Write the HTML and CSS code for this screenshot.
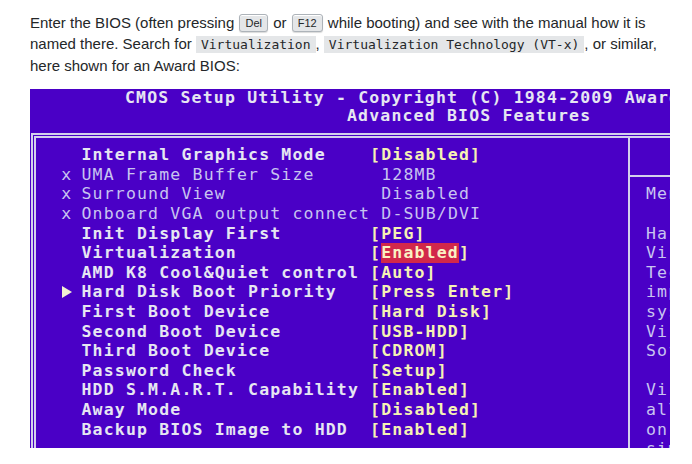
FILE: index.html
```html
<!DOCTYPE html>
<html lang="en">
<head>
<meta charset="utf-8">
<title>Award BIOS</title>
<link rel="stylesheet" href="styles.css">
</head>
<body>
<div class="post">
  <p class="lead">Enter the BIOS (often pressing <kbd>Del</kbd> or <kbd>F12</kbd> while booting) and see with the manual how it is named there. Search for <code>Virtualization</code>, <code>Virtualization Technology (VT-x)</code>, or similar, here shown for an Award BIOS:</p>
  <div class="shot">
    <div class="hdr">
      <div class="hdr-1">CMOS Setup Utility - Copyright (C) 1984-2009 Award Software</div>
      <div class="hdr-2">Advanced BIOS Features</div>
    </div>
    <div class="frame">
      <div class="inner">
        <div class="list">
          <div class="row"><span class="mark"></span><span class="label">Internal Graphics Mode</span><span class="val">[Disabled]</span></div>
          <div class="row dim"><span class="mark">x</span><span class="label">UMA Frame Buffer Size</span><span class="val">128MB</span></div>
          <div class="row dim"><span class="mark">x</span><span class="label">Surround View</span><span class="val">Disabled</span></div>
          <div class="row dim"><span class="mark">x</span><span class="label">Onboard VGA output connect</span><span class="val">D-SUB/DVI</span></div>
          <div class="row"><span class="mark"></span><span class="label">Init Display First</span><span class="val">[PEG]</span></div>
          <div class="row"><span class="mark"></span><span class="label">Virtualization</span><span class="val">[<span class="hl">Enabled</span>]</span></div>
          <div class="row"><span class="mark"></span><span class="label">AMD K8 Cool&amp;Quiet control</span><span class="val">[Auto]</span></div>
          <div class="row"><span class="mark"><svg class="tri" width="10" height="12" viewBox="0 0 10 12"><path d="M0 0 L10 6 L0 12 Z"/></svg></span><span class="label">Hard Disk Boot Priority</span><span class="val">[Press Enter]</span></div>
          <div class="row"><span class="mark"></span><span class="label">First Boot Device</span><span class="val">[Hard Disk]</span></div>
          <div class="row"><span class="mark"></span><span class="label">Second Boot Device</span><span class="val">[USB-HDD]</span></div>
          <div class="row"><span class="mark"></span><span class="label">Third Boot Device</span><span class="val">[CDROM]</span></div>
          <div class="row"><span class="mark"></span><span class="label">Password Check</span><span class="val">[Setup]</span></div>
          <div class="row"><span class="mark"></span><span class="label">HDD S.M.A.R.T. Capability</span><span class="val">[Enabled]</span></div>
          <div class="row"><span class="mark"></span><span class="label">Away Mode</span><span class="val">[Disabled]</span></div>
          <div class="row"><span class="mark"></span><span class="label">Backup BIOS Image to HDD</span><span class="val">[Enabled]</span></div>
        </div>
        <div class="help">
          <div class="help-top">Item Help</div>
          <div class="help-body">
            <div class="hrow">Menu Level</div>
            <div class="hrow"></div>
            <div class="hrow">Hardware assisted</div>
            <div class="hrow">Virtualization</div>
            <div class="hrow">Technology which help</div>
            <div class="hrow">improve performance of</div>
            <div class="hrow">system if you install</div>
            <div class="hrow">Virtual Machine Monitor</div>
            <div class="hrow">Software.</div>
            <div class="hrow"></div>
            <div class="hrow">Virtualization Technology</div>
            <div class="hrow">allows a platform to run</div>
            <div class="hrow">on multiple operating</div>
            <div class="hrow">simultaneously.</div>
          </div>
        </div>
      </div>
    </div>
  </div>
</div>
</body>
</html>
```
FILE: styles.css
```css
html, body {
  margin: 0;
  background: #ffffff;
}

.post {
  padding: 12px 0 0 30px;
  width: 634px;
  font-family: "Liberation Sans", Arial, sans-serif;
  font-size: 15px;
  line-height: 21px;
  color: #242729;
}

.lead {
  margin: 0 0 13px;
}

kbd {
  display: inline-block;
  font-family: "Liberation Sans", Arial, sans-serif;
  font-size: 11px;
  line-height: 14px;
  padding: 1px 5px;
  margin: 0 1px;
  color: #242729;
  background: #e4e6e8;
  border: 1px solid #adb3b9;
  border-radius: 3px;
  box-shadow: 0 1px 1px rgba(12, 13, 14, 0.15), inset 0 1px 0 0 #ffffff;
  vertical-align: 1px;
}

code {
  font-family: "DejaVu Sans Mono", "Liberation Mono", monospace;
  font-size: 13px;
  padding: 1px 5px;
  background: #e4e6e8;
  color: #242729;
}

/* BIOS screenshot */
.shot {
  width: 640px;
  height: 359px;
  overflow: hidden;
  background: #4a00c6;
  font-family: "DejaVu Sans Mono", "Liberation Mono", monospace;
  font-weight: bold;
  font-size: 16.5px;
  letter-spacing: 1.17px;
  color: #e6e6f2;
  white-space: nowrap;
}

.hdr {
  height: 44px;
}

.hdr-1 {
  height: 17px;
  line-height: 17px;
  padding-left: 95px;
}

.hdr-2 {
  height: 19.6px;
  line-height: 19.6px;
  padding-left: 317px;
}

.frame {
  margin-left: 1px;
  border-top: 2px solid #d4d0ec;
  border-left: 2px solid #d4d0ec;
  padding: 1px 0 0 1px;
}

.inner {
  display: flex;
  border-top: 2px solid #d4d0ec;
  border-left: 2px solid #d4d0ec;
  height: 320px;
}

.list {
  flex: 0 0 592px;
  padding-top: 7.2px;
  padding-left: 23.3px;
  box-sizing: border-box;
}

.row {
  display: flex;
  height: 19.6px;
  line-height: 19.6px;
}

.mark {
  flex: 0 0 22.2px;
  display: flex;
  align-items: center;
}

.label {
  flex: 0 0 288.6px;
  color: #e6e6f2;
}

.val {
  color: #f6f2b4;
}

.dim .mark,
.dim .label,
.dim .val {
  font-weight: normal;
  color: #c8c4f0;
}

.dim .mark {
  padding-left: 2px;
  box-sizing: border-box;
}

.dim .val {
  padding-left: 11.1px;
}

.tri {
  display: block;
  margin-left: 2.5px;
  fill: #f2f0d2;
}

.hl {
  display: inline-block;
  height: 19.6px;
  background: #d2284a;
  color: #faf2c4;
}

.help {
  flex: 0 0 260px;
  border-left: 2px solid #d4d0ec;
  font-weight: normal;
  color: #c8c4f0;
}

.help-top {
  height: 37px;
  border-bottom: 2px solid #d4d0ec;
  line-height: 37px;
  padding-left: 90px;
  color: #e6e6f2;
}

.help-body {
  padding: 7.4px 0 0 16px;
}

.hrow {
  height: 19.6px;
  line-height: 19.6px;
}
```
